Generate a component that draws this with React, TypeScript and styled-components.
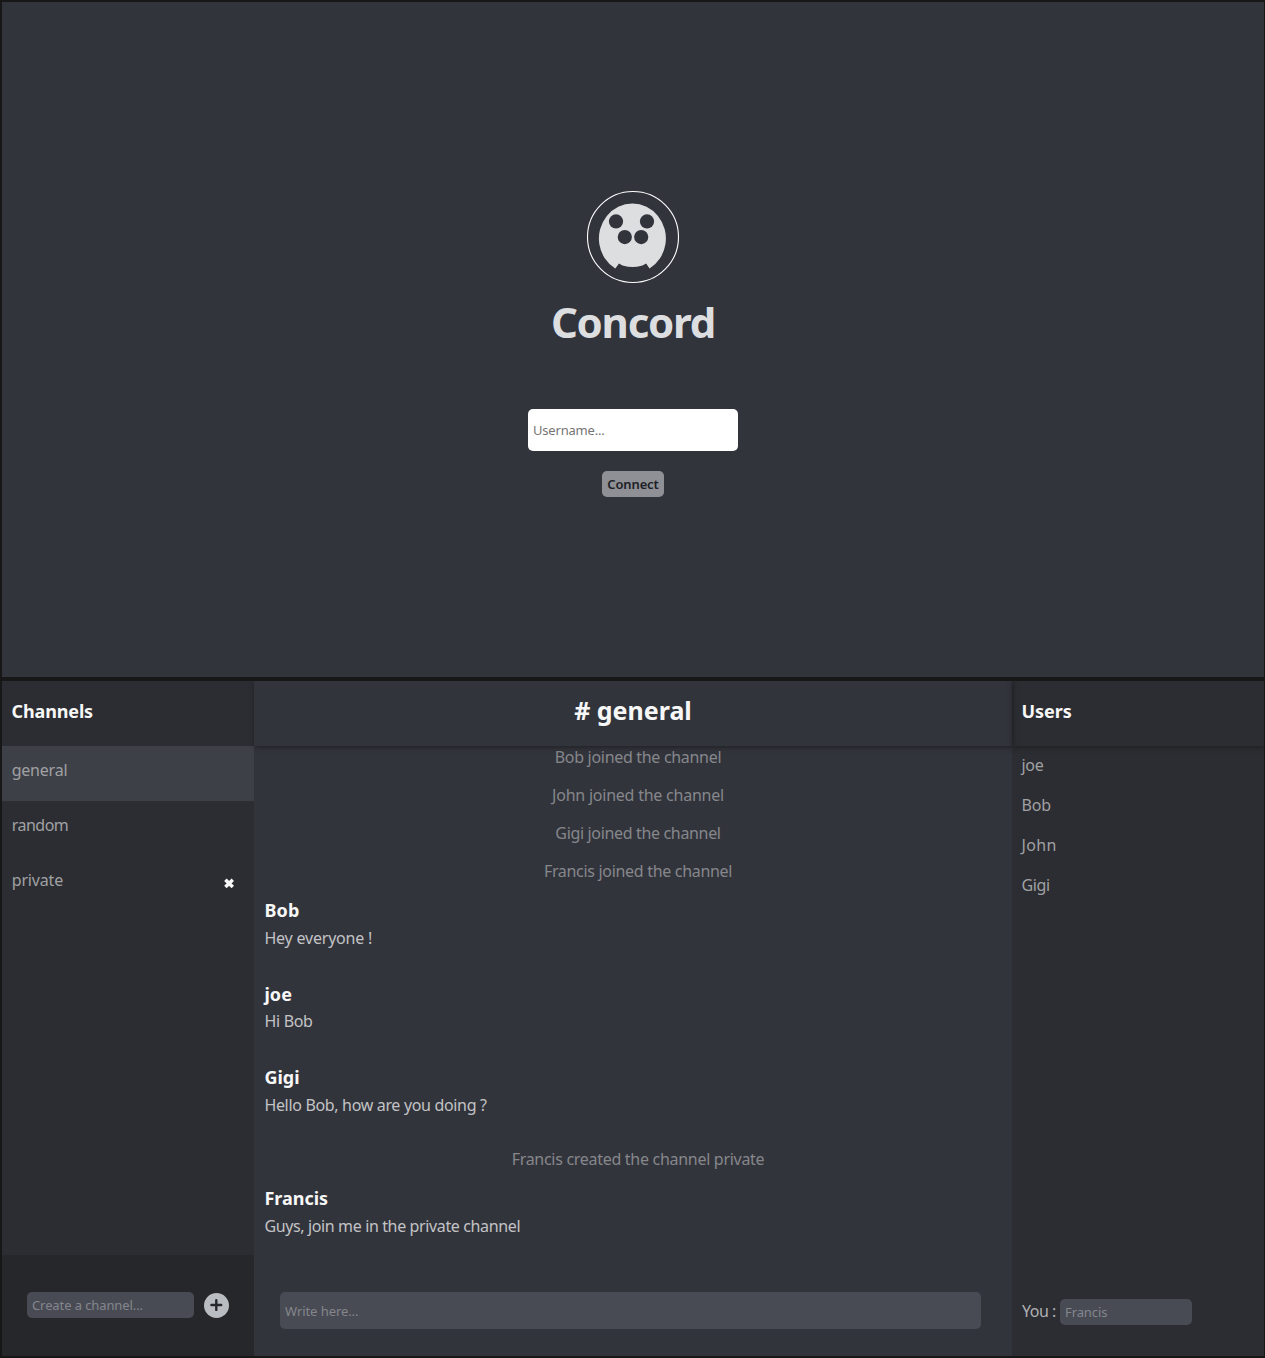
import React from "react";
import styled, { createGlobalStyle } from "styled-components";

const GlobalStyle = createGlobalStyle`
  *, *::before, *::after { box-sizing: border-box; }
  body {
    margin: 0;
    background: #171717;
    font-family: "Noto Sans", "Open Sans", sans-serif;
    font-size: 16px;
  }
  h1, h2, h3, p, ul { margin: 0; padding: 0; }
`;

type Tracked = { $track?: number };
const tracking = ({ $track = 0 }: Tracked) => `${$track}px`;

const Screens = styled.div`
  display: flex;
  flex-direction: column;
  gap: 4px;
  height: 1358px;
  padding: 2px 1px 2px 2px;
`;

const LoginScreen = styled.section`
  display: flex;
  flex-direction: column;
  align-items: center;
  height: 675px;
  padding-top: 188px;
  background: #32343c;
`;

const LogoArt = styled.svg`
  display: block;
  width: 94px;
  height: 94px;
`;

const AppName = styled.h1`
  margin-top: 8px;
  color: #dddee0;
  font-size: 42px;
  font-weight: 700;
  line-height: 60px;
  letter-spacing: -1.25px;
`;

const Field = styled.input<Tracked>`
  border: 0;
  outline: 0;
  border-radius: 5px;
  padding: 0 5px;
  background: #494b54;
  color: #c4c4c6;
  font-family: inherit;
  font-size: 13px;
  letter-spacing: ${tracking};
  &::placeholder { color: #84868c; opacity: 1; }
`;

const UsernameField = styled(Field)`
  width: 210px;
  height: 42px;
  margin-top: 57px;
  background: #fff;
  &::placeholder { color: #757575; }
`;

const ConnectButton = styled.button`
  width: 62px;
  height: 26px;
  margin-top: 20px;
  padding: 0;
  border: 0;
  border-radius: 5px;
  background: #8e9095;
  color: #202126;
  font-family: inherit;
  font-size: 13px;
  font-weight: 600;
  letter-spacing: -0.15px;
`;

const ChatScreen = styled.section`
  display: grid;
  grid-template-columns: 252px 758px 252px;
  height: 675px;
  background: #2c2d32;
  overflow: hidden;
`;

const Column = styled.div`
  display: flex;
  flex-direction: column;
  min-height: 0;
`;

const Conversation = styled(Column)`
  background: #32343c;
`;

const SideHeader = styled.header<{ $raised?: boolean }>`
  flex: none;
  height: 65px;
  padding: 18px 9.6px 0;
  z-index: 1;
  box-shadow: ${({ $raised }) => ($raised ? "1px 1px 5px #1e1f22" : "none")};
`;

const SideTitle = styled.h3<Tracked>`
  color: #f7f7f7;
  font-size: 18px;
  line-height: 24px;
  letter-spacing: ${tracking};
`;

const RoomHeader = styled.header`
  flex: none;
  height: 65px;
  padding-top: 12px;
  z-index: 1;
  text-align: center;
  box-shadow: 1px 1px 5px #1e1f22;
`;

const RoomTitle = styled.h2`
  color: #f7f7f7;
  font-size: 25px;
  line-height: 34px;
`;

const ChannelList = styled.ul`
  flex: 1;
  list-style: none;
`;

const ChannelItem = styled.li<Tracked & { $active?: boolean }>`
  display: flex;
  justify-content: space-between;
  height: 55px;
  padding: 12px 20px 0 9.7px;
  background: ${({ $active }) => ($active ? "#3e4047" : "transparent")};
  color: #a0a1a4;
  line-height: 24px;
  letter-spacing: ${tracking};
`;

const RemoveIcon = styled.svg`
  width: 10px;
  height: 10px;
  margin-top: 10px;
`;

const CreateBar = styled.form`
  display: flex;
  flex: none;
  gap: 10px;
  height: 101px;
  padding: 37px 25px 0;
  background: #26272b;
`;

const ChannelField = styled(Field)`
  width: 167px;
  height: 26px;
`;

const AddButton = styled.button`
  width: 25px;
  height: 25px;
  margin-top: 1px;
  padding: 0;
  border: 0;
  border-radius: 50%;
  background: #b9bdc1;
  svg { display: block; }
`;

const Feed = styled.div`
  display: flex;
  flex: 1;
  flex-direction: column;
  justify-content: flex-end;
  min-height: 0;
  padding: 0 0 0.2px 10px;
  overflow: hidden;
`;

const Notice = styled.p<Tracked>`
  flex: none;
  height: 38px;
  color: #86878b;
  line-height: 38px;
  text-align: center;
  letter-spacing: ${tracking};
`;

const Message = styled.article`
  flex: none;
  height: 83.4px;
  padding: 8px 0 0 0.4px;
`;

const Author = styled.h3<Tracked>`
  color: #f7f7f7;
  font-size: 18px;
  line-height: 25px;
  letter-spacing: ${tracking};
`;

const Body = styled.p<Tracked>`
  margin-top: 2.6px;
  color: #c3c3c5;
  line-height: 24px;
  letter-spacing: ${tracking};
`;

const Composer = styled.form`
  flex: none;
  height: 94px;
  padding: 30px 31px 0 26px;
`;

const MessageField = styled(Field)`
  display: block;
  width: 100%;
  height: 37px;
`;

const UserList = styled.ul`
  flex: 1;
  list-style: none;
`;

const UserItem = styled.li<Tracked>`
  height: 40px;
  padding-left: 9.4px;
  color: #a0a1a4;
  line-height: 38px;
  letter-spacing: ${tracking};
`;

const Identity = styled.div`
  display: flex;
  flex: none;
  gap: 4px;
  height: 57px;
  padding-left: 10px;
`;

const IdentityLabel = styled.label`
  width: 34px;
  color: #b0b1b4;
  line-height: 24px;
  letter-spacing: -0.5px;
  white-space: nowrap;
`;

const NameField = styled(Field)`
  width: 132px;
  height: 26px;
`;

type FeedEntry =
  | { kind: "notice"; text: string; track: number }
  | { kind: "message"; author: string; authorTrack: number; text: string; track: number };

const feed: FeedEntry[] = [
  { kind: "notice", text: "Bob joined the channel", track: -0.31 },
  { kind: "notice", text: "John joined the channel", track: -0.23 },
  { kind: "notice", text: "Gigi joined the channel", track: -0.34 },
  { kind: "notice", text: "Francis joined the channel", track: -0.31 },
  { kind: "message", author: "Bob", authorTrack: 0.2, text: "Hey everyone !", track: -0.2 },
  { kind: "message", author: "joe", authorTrack: 0.1, text: "Hi Bob", track: -0.3 },
  { kind: "message", author: "Gigi", authorTrack: 0, text: "Hello Bob, how are you doing ?", track: -0.33 },
  { kind: "notice", text: "Francis created the channel private", track: -0.29 },
  { kind: "message", author: "Francis", authorTrack: 0, text: "Guys, join me in the private channel", track: -0.37 },
];

const channels = [
  { name: "general", track: -0.22, active: true, removable: false },
  { name: "random", track: -0.5, active: false, removable: false },
  { name: "private", track: -0.15, active: false, removable: true },
];

const users = [
  { name: "joe", track: -0.2 },
  { name: "Bob", track: -0.1 },
  { name: "John", track: 0.4 },
  { name: "Gigi", track: -0.3 },
];

const Logo = () => (
  <LogoArt viewBox="0 0 94 94" aria-label="Concord logo">
    <circle cx="47" cy="47" r="45.5" fill="none" stroke="#fff" strokeWidth="1.1" />
    <path
      d="M29.3 78.6 A33.5 35 0 1 1 63.5 78.6 L60.2 73.5 C58.8 74.2 58 75 55.5 75.8 Q46.5 78.2 37.5 75.8 C35 75 34.3 74.2 33 73.5 Z"
      fill="#dddee0"
    />
    <g fill="#32343c">
      <circle cx="30" cy="31.4" r="7.1" />
      <circle cx="61" cy="31.4" r="7.1" />
      <circle cx="38.8" cy="47.1" r="7.1" />
      <circle cx="55.2" cy="47.1" r="7.1" />
    </g>
  </LogoArt>
);

export default function App() {
  return (
    <>
      <GlobalStyle />
      <Screens>
        <LoginScreen>
          <Logo />
          <AppName>Concord</AppName>
          <UsernameField placeholder="Username..." $track={-0.2} />
          <ConnectButton>Connect</ConnectButton>
        </LoginScreen>
        <ChatScreen>
          <Column>
            <SideHeader>
              <SideTitle $track={-0.15}>Channels</SideTitle>
            </SideHeader>
            <ChannelList>
              {channels.map((c) => (
                <ChannelItem key={c.name} $active={c.active} $track={c.track}>
                  {c.name}
                  {c.removable && (
                    <RemoveIcon viewBox="0 0 10 10">
                      <path d="M1.4 1.8 L8.8 9 M8.8 1.8 L1.4 9" stroke="#f7f7f7" strokeWidth="3.5" />
                    </RemoveIcon>
                  )}
                </ChannelItem>
              ))}
            </ChannelList>
            <CreateBar>
              <ChannelField placeholder="Create a channel..." $track={-0.1} />
              <AddButton type="button" aria-label="Create">
                <svg width="25" height="25" viewBox="0 0 25 25">
                  <path d="M12.3 7.2 V16.9 M7.4 12 H17.2" stroke="#26272b" strokeWidth="2.4" strokeLinecap="round" />
                </svg>
              </AddButton>
            </CreateBar>
          </Column>
          <Conversation>
            <RoomHeader>
              <RoomTitle># general</RoomTitle>
            </RoomHeader>
            <Feed>
              {feed.map((e) =>
                e.kind === "notice" ? (
                  <Notice key={e.text} $track={e.track}>{e.text}</Notice>
                ) : (
                  <Message key={e.text}>
                    <Author $track={e.authorTrack}>{e.author}</Author>
                    <Body $track={e.track}>{e.text}</Body>
                  </Message>
                )
              )}
            </Feed>
            <Composer>
              <MessageField placeholder="Write here..." $track={-0.07} />
            </Composer>
          </Conversation>
          <Column>
            <SideHeader $raised>
              <SideTitle $track={-0.1}>Users</SideTitle>
            </SideHeader>
            <UserList>
              {users.map((u) => (
                <UserItem key={u.name} $track={u.track}>{u.name}</UserItem>
              ))}
            </UserList>
            <Identity>
              <IdentityLabel>You :</IdentityLabel>
              <NameField placeholder="Francis" $track={-0.1} />
            </Identity>
          </Column>
        </ChatScreen>
      </Screens>
    </>
  );
}
